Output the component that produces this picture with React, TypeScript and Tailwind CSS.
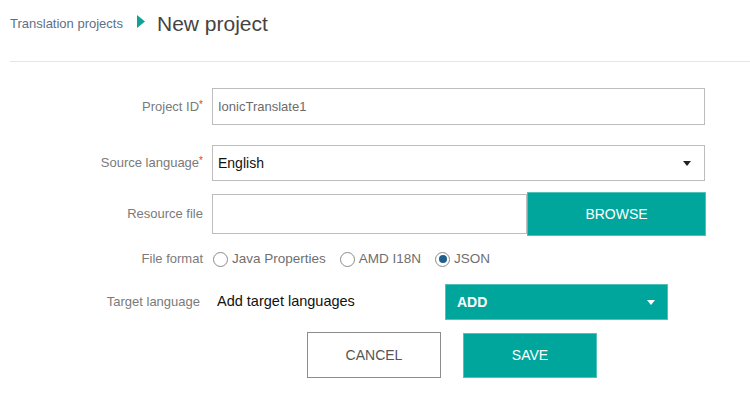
const Label = ({ text, required }: { text: string; required?: boolean }) => (
    <div className="w-[203px] shrink-0 text-right text-[13px] text-[#7a7a7a]">
        {text}
        {required && <span className="text-[#e0413b] text-[10px] align-top">*</span>}
    </div>
);

const Radio = ({ label, checked }: { label: string; checked?: boolean }) => (
    <label className="flex items-center gap-[4px] mr-[14px]">
        <span className="w-[15px] h-[15px] rounded-full border border-[#8a8a8a] flex items-center justify-center">
            {checked && <span className="w-[8px] h-[8px] rounded-full bg-[#1d5f8f]" />}
        </span>
        <span className="text-[13.5px] text-[#6f6f6f]">{label}</span>
    </label>
);

const Caret = ({ color }: { color: string }) => (
    <svg width="8" height="5" viewBox="0 0 8 5"><path d="M0 0h8L4 5z" fill={color} /></svg>
);

export default function App() {
    return (
        <div className="w-[750px] h-[403px] bg-white font-['Liberation_Sans',Arial,sans-serif] overflow-hidden">
            <div className="ml-[10px] h-[62px] border-b border-[#e6e6e6] flex items-start pt-[10px]">
                <span className="text-[13px] text-[#5b7189] mt-[4px]">Translation projects</span>
                <svg className="ml-[14px] mt-[5px]" width="8" height="13" viewBox="0 0 8 13"><path d="M0 0l8 6.5L0 13z" fill="#12a195" /></svg>
                <span className="ml-[12px] mt-[2px] text-[21px] text-[#444] leading-[24px]">New project</span>
            </div>

            <div className="flex items-center mt-[26px] h-[37px]">
                <Label text="Project ID" required />
                <div className="ml-[9px] w-[493px] h-full border border-[#bdbdbd] flex items-center px-[5px] text-[13px] text-[#6b6b6b]">
                    IonicTranslate1
                </div>
            </div>

            <div className="flex items-center mt-[20px] h-[36px]">
                <Label text="Source language" required />
                <div className="ml-[9px] w-[493px] h-full border border-[#bdbdbd] flex items-center justify-between px-[5px] text-[14px] text-[#111]">
                    <span>English</span>
                    <span className="mr-[8px]"><Caret color="#222" /></span>
                </div>
            </div>

            <div className="flex items-center mt-[11px] h-[44px]">
                <Label text="Resource file" />
                <div className="ml-[9px] w-[315px] h-[40px] border border-[#bdbdbd]" />
                <button className="w-[179px] h-[44px] bg-[#00a69c] border border-[#4fc3ba] text-white text-[14px]">BROWSE</button>
            </div>

            <div className="flex items-center mt-[13px] h-[20px]">
                <Label text="File format" />
                <div className="ml-[10px] flex items-center">
                    <Radio label="Java Properties" />
                    <Radio label="AMD I18N" />
                    <Radio label="JSON" checked />
                </div>
            </div>

            <div className="flex items-center mt-[15px] h-[36px]">
                <div className="w-[200px] shrink-0 text-right text-[13px] text-[#7a7a7a]">Target language</div>
                <span className="ml-[17px] w-[228px] text-[14.5px] text-[#111]">Add target languages</span>
                <button className="w-[223px] h-[36px] bg-[#00a69c] border border-[#4fc3ba] text-white text-[14px] font-bold flex items-center justify-between px-[11px]">
                    <span>ADD</span>
                    <span className="mr-[1px]"><Caret color="#fff" /></span>
                </button>
            </div>

            <div className="flex items-center mt-[12px] pl-[307px] gap-[22px]">
                <button className="w-[134px] h-[46px] border border-[#8c8c8c] text-[14px] text-[#555]">CANCEL</button>
                <button className="w-[134px] h-[45px] bg-[#00a69c] border border-[#4fc3ba] text-[14px] text-white">SAVE</button>
            </div>
        </div>
    );
}
